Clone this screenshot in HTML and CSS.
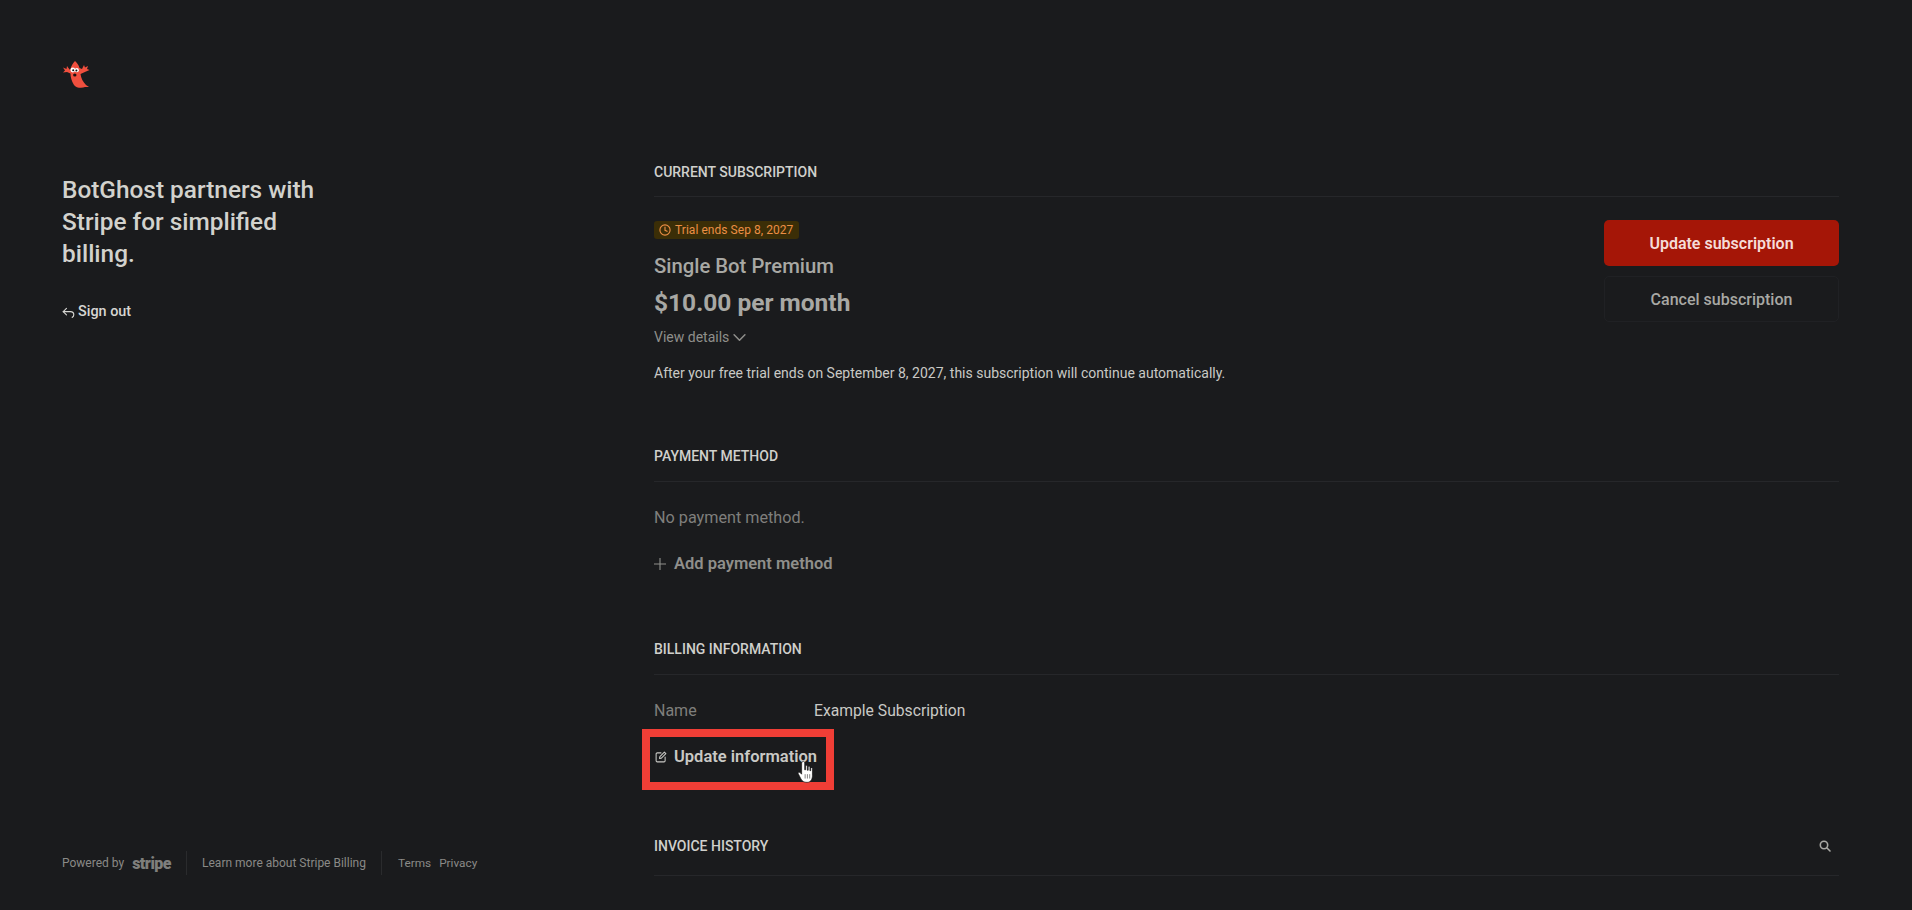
FILE: index.html
```html
<!DOCTYPE html>
<html lang="en">

<head>
    <meta charset="utf-8">
    <meta name="viewport" content="width=device-width, initial-scale=1.0">
    <title>BotGhost billing</title>
    <link rel="stylesheet" href="styles.css">
</head>

<body>
    <div class="page">
        <aside class="sidebar">
            <div class="side-top">
                <svg class="logo" viewBox="0 0 28 28" width="28" height="28" aria-label="BotGhost logo">
                    <path d="M13 1 C15 3 17 5 17.5 8 L20 9 L22 5 L23 7.5 L26 6 L25 9 L27.5 10 L24 11.5 L18.5 14 C19 18 21 22 24 25 L27 27 L23 27 C20 28.5 14 28 12 25 C9.5 21 8.5 17 8.5 13.5 L5 12 L1 12.5 L3 10.5 L1 7.5 L4.5 9 L5 6 L7.5 9.5 L8.5 9.5 C9 6 11 3 13 1 Z" fill="#f04f3e"/>
                    <circle cx="10.8" cy="10" r="2.4" fill="#fff"/>
                    <circle cx="14.8" cy="10.2" r="2.1" fill="#fff"/>
                    <circle cx="11.2" cy="10.2" r="1" fill="#111"/>
                    <circle cx="14.4" cy="10.4" r="1" fill="#111"/>
                    <ellipse cx="12.8" cy="15" rx="1.7" ry="1.5" fill="#1a1111"/>
                </svg>
                <h1>BotGhost partners with Stripe for simplified billing.</h1>
                <a class="sign-out" href="#">
                    <svg viewBox="0 0 16 16" width="13" height="13" fill="none" stroke="currentColor" stroke-width="1.4" stroke-linecap="round" stroke-linejoin="round">
                        <path d="M5.5 3 L1.5 7 L5.5 11"/>
                        <path d="M1.5 7 H10.5 C13 7 14.5 8.8 14.5 10.8 C14.5 12.4 13.6 13.6 12.5 14"/>
                    </svg>
                    Sign out
                </a>
            </div>
            <footer class="side-footer">
                <span class="powered">Powered by <b class="stripe-word">stripe</b></span>
                <a href="#" class="foot-link">Learn more about Stripe Billing</a>
                <span class="foot-legal"><a href="#">Terms</a><a href="#">Privacy</a></span>
            </footer>
        </aside>

        <main class="content">
            <section class="block block-sub">
                <h2 class="block-title">CURRENT SUBSCRIPTION</h2>
                <div class="sub-row">
                    <div class="sub-info">
                        <span class="badge">
                            <svg viewBox="0 0 16 16" width="12" height="12" fill="none" stroke="currentColor" stroke-width="1.5" stroke-linecap="round">
                                <circle cx="8" cy="8" r="6.8"/>
                                <path d="M8 4 V8.4 L10.8 9.8"/>
                            </svg>
                            Trial ends Sep 8, 2027
                        </span>
                        <div class="plan-name">Single Bot Premium</div>
                        <div class="plan-price">$10.00 per month</div>
                        <a class="details" href="#">View details
                            <svg viewBox="0 0 12 8" width="13" height="9" fill="none" stroke="currentColor" stroke-width="1.4" stroke-linecap="round" stroke-linejoin="round"><path d="M1 1.5 L6 6.5 L11 1.5"/></svg>
                        </a>
                        <p class="trial-note">After your free trial ends on September 8, 2027, this subscription will continue automatically.</p>
                    </div>
                    <div class="sub-actions">
                        <button class="btn btn-primary">Update subscription</button>
                        <button class="btn btn-ghost">Cancel subscription</button>
                    </div>
                </div>
            </section>

            <section class="block block-pay">
                <h2 class="block-title">PAYMENT METHOD</h2>
                <p class="muted-line">No payment method.</p>
                <a class="action action-dim" href="#">
                    <svg viewBox="0 0 12 12" width="12" height="12" fill="none" stroke="currentColor" stroke-width="1.1"><path d="M6 0 V12 M0 6 H12"/></svg>
                    Add payment method
                </a>
            </section>

            <section class="block block-bill">
                <h2 class="block-title">BILLING INFORMATION</h2>
                <div class="info-row">
                    <span class="info-label">Name</span>
                    <span class="info-value">Example Subscription</span>
                </div>
                <div class="update-wrap">
                    <a class="action action-bright" href="#">
                        <svg viewBox="0 0 16 16" width="12" height="12" fill="none" stroke="currentColor" stroke-width="1.4" stroke-linecap="round" stroke-linejoin="round">
                            <path d="M8 2.5 H3 A1.5 1.5 0 0 0 1.5 4 V13 A1.5 1.5 0 0 0 3 14.5 H12 A1.5 1.5 0 0 0 13.5 13 V8"/>
                            <path d="M6 10 L6.5 7.5 L12.5 1.5 L14.5 3.5 L8.5 9.5 Z"/>
                        </svg>
                        Update information
                    </a>
                    <span class="highlight"></span>
                    <svg class="cursor" viewBox="0 0 16 22" width="18" height="24">
                        <path d="M5 1.5 C5.8 1 6.8 1.5 6.8 2.5 V9 L7.6 9 V5.5 C7.8 4.6 9 4.6 9.2 5.5 V9.4 L10 9.4 V6.3 C10.2 5.4 11.4 5.4 11.6 6.3 V9.8 L12.3 9.8 V7.6 C12.5 6.8 13.7 6.8 13.9 7.6 V14 C13.9 17.5 12.5 20.5 9 20.5 C6 20.5 4.6 19.6 3.4 17.4 L0.9 12.6 C0.5 11.6 1.6 10.8 2.5 11.5 L4 13 V2.5 C4 2 4.4 1.6 5 1.5 Z" fill="#fff" stroke="#111" stroke-width="0.6"/>
                        <path d="M7.2 13 V17 M9.3 13 V17 M11.4 13 V17" stroke="#444" stroke-width="0.6"/>
                    </svg>
                </div>
            </section>

            <section class="block block-inv">
                <div class="block-title title-row">
                    <h2>INVOICE HISTORY</h2>
                    <svg viewBox="0 0 12 12" width="12" height="12" fill="none" stroke="#a8a8a4" stroke-width="1.6" stroke-linecap="round"><circle cx="5" cy="5" r="3.7"/><path d="M8 8 L11 11"/></svg>
                </div>
            </section>
        </main>
    </div>
</body></html>
```

FILE: styles.css
```css
/****GENERAL****/

html,
body {
    height: 100%;
}

body {
    margin: 0;
    background-color: #1a1b1d;
    color: #d6d6d2;
    font-family: 'Roboto', 'Noto Sans', sans-serif;
    overflow: hidden;
}

a {
    color: inherit;
    text-decoration: none;
}

h1,
h2,
p {
    margin: 0;
}

svg {
    display: block;
    flex-shrink: 0;
}

.page {
    display: flex;
    height: 910px;
}

/****SIDEBAR****/

.sidebar {
    width: 654px;
    flex-shrink: 0;
    box-sizing: border-box;
    padding: 60px 0 0 62px;
    display: flex;
    flex-direction: column;
    justify-content: space-between;
}

.logo {
    margin-bottom: 86px;
}

h1 {
    width: 270px;
    font-size: 24.4px;
    font-weight: 500;
    line-height: 32px;
    color: #d2d2cd;
}

.sign-out {
    display: flex;
    align-items: center;
    gap: 3px;
    margin-top: 32px;
    font-size: 14.4px;
    font-weight: 500;
    line-height: 20px;
    color: #d6d6d2;
}

.side-footer {
    display: flex;
    align-items: center;
    height: 24px;
    margin-bottom: 35px;
    font-size: 12px;
    color: #8a8a87;
}

.powered {
    display: flex;
    align-items: center;
    gap: 8px;
    height: 24px;
    padding-right: 15px;
    border-right: 1px solid #2a2b2d;
}

.stripe-word {
    font-size: 16px;
    font-weight: 900;
    letter-spacing: -0.5px;
    color: #7f7f7c;
}

.foot-link {
    padding: 0 15px;
    border-right: 1px solid #2a2b2d;
    line-height: 24px;
}

.foot-legal {
    display: flex;
    gap: 8px;
    padding-left: 16px;
    font-size: 11.8px;
}

/****CONTENT****/

.content {
    flex: 1;
    padding: 161px 73px 0 0;
    min-width: 0;
}

.block-title {
    font-size: 14px;
    font-weight: 500;
    line-height: 22px;
    padding-bottom: 14px;
    border-bottom: 1px solid #26272a;
    color: #d0d0cc;
}

.block-sub .block-title {
    padding-bottom: 13px;
}

.title-row {
    display: flex;
    justify-content: space-between;
    align-items: center;
    padding-right: 8px;
    padding-bottom: 18px;
}

.title-row h2 {
    font-size: 14px;
    font-weight: 500;
}

.block-pay {
    margin-top: 62px;
}

.block-bill {
    margin-top: 62px;
}

.block-inv {
    margin-top: 66px;
}

/****SUBSCRIPTION****/

.sub-row {
    display: flex;
    justify-content: space-between;
    padding-top: 24px;
}

.badge {
    display: inline-flex;
    align-items: center;
    gap: 4px;
    height: 18px;
    padding: 0 6px 0 5px;
    border-radius: 3px;
    background-color: #3b2e07;
    color: #ec8f45;
    font-size: 12px;
    letter-spacing: 0.05px;
}

.plan-name {
    margin-top: 11px;
    font-size: 20.3px;
    font-weight: 500;
    line-height: 30px;
    color: #a8a8a4;
}

.plan-price {
    margin-top: 5px;
    font-size: 24.5px;
    font-weight: 700;
    line-height: 34px;
    color: #a8a8a4;
}

.details {
    display: inline-flex;
    align-items: center;
    gap: 4px;
    margin-top: 7px;
    font-size: 14px;
    line-height: 20px;
    color: #8f8f8b;
}

.trial-note {
    margin-top: 16px;
    font-size: 14px;
    line-height: 20px;
    color: #c9c9c5;
}

.sub-actions {
    display: flex;
    flex-direction: column;
    gap: 10px;
    width: 235px;
    margin-top: -1px;
}

.btn {
    font-family: inherit;
    font-size: 16px;
    font-weight: 600;
    border-radius: 5px;
    cursor: pointer;
}

.btn-primary {
    height: 46px;
    border: none;
    background-color: #a51607;
    color: #f5dcd8;
}

.btn-ghost {
    height: 46px;
    border: 1px solid #202124;
    background-color: transparent;
    color: #a8a8a4;
    font-weight: 500;
}

/****PAYMENT + BILLING****/

.muted-line {
    margin-top: 24px;
    font-size: 16.2px;
    line-height: 24px;
    color: #7f7f7c;
}

.action {
    display: flex;
    align-items: center;
    gap: 8px;
    font-size: 16.5px;
    font-weight: 600;
    line-height: 24px;
}

.action-dim {
    margin-top: 22px;
    color: #8f8f8b;
}

.info-row {
    display: flex;
    margin-top: 24px;
    font-size: 16px;
    line-height: 24px;
}

.info-label {
    width: 160px;
    color: #7f7f7c;
}

.info-value {
    font-size: 15.7px;
    color: #c9c9c5;
}

.update-wrap {
    position: relative;
    margin-top: 22px;
    width: 180px;
}

.action-bright {
    color: #c9c9c5;
}

.action-bright svg {
    margin-left: 1px;
    margin-right: -1px;
}

/* annotation box + pointer lie over the link */
.highlight {
    position: absolute;
    top: -16px;
    left: -12px;
    width: 176px;
    height: 45px;
    border: 8px solid #f03e36;
}

.cursor {
    position: absolute;
    top: 15px;
    left: 143px;
}
```
